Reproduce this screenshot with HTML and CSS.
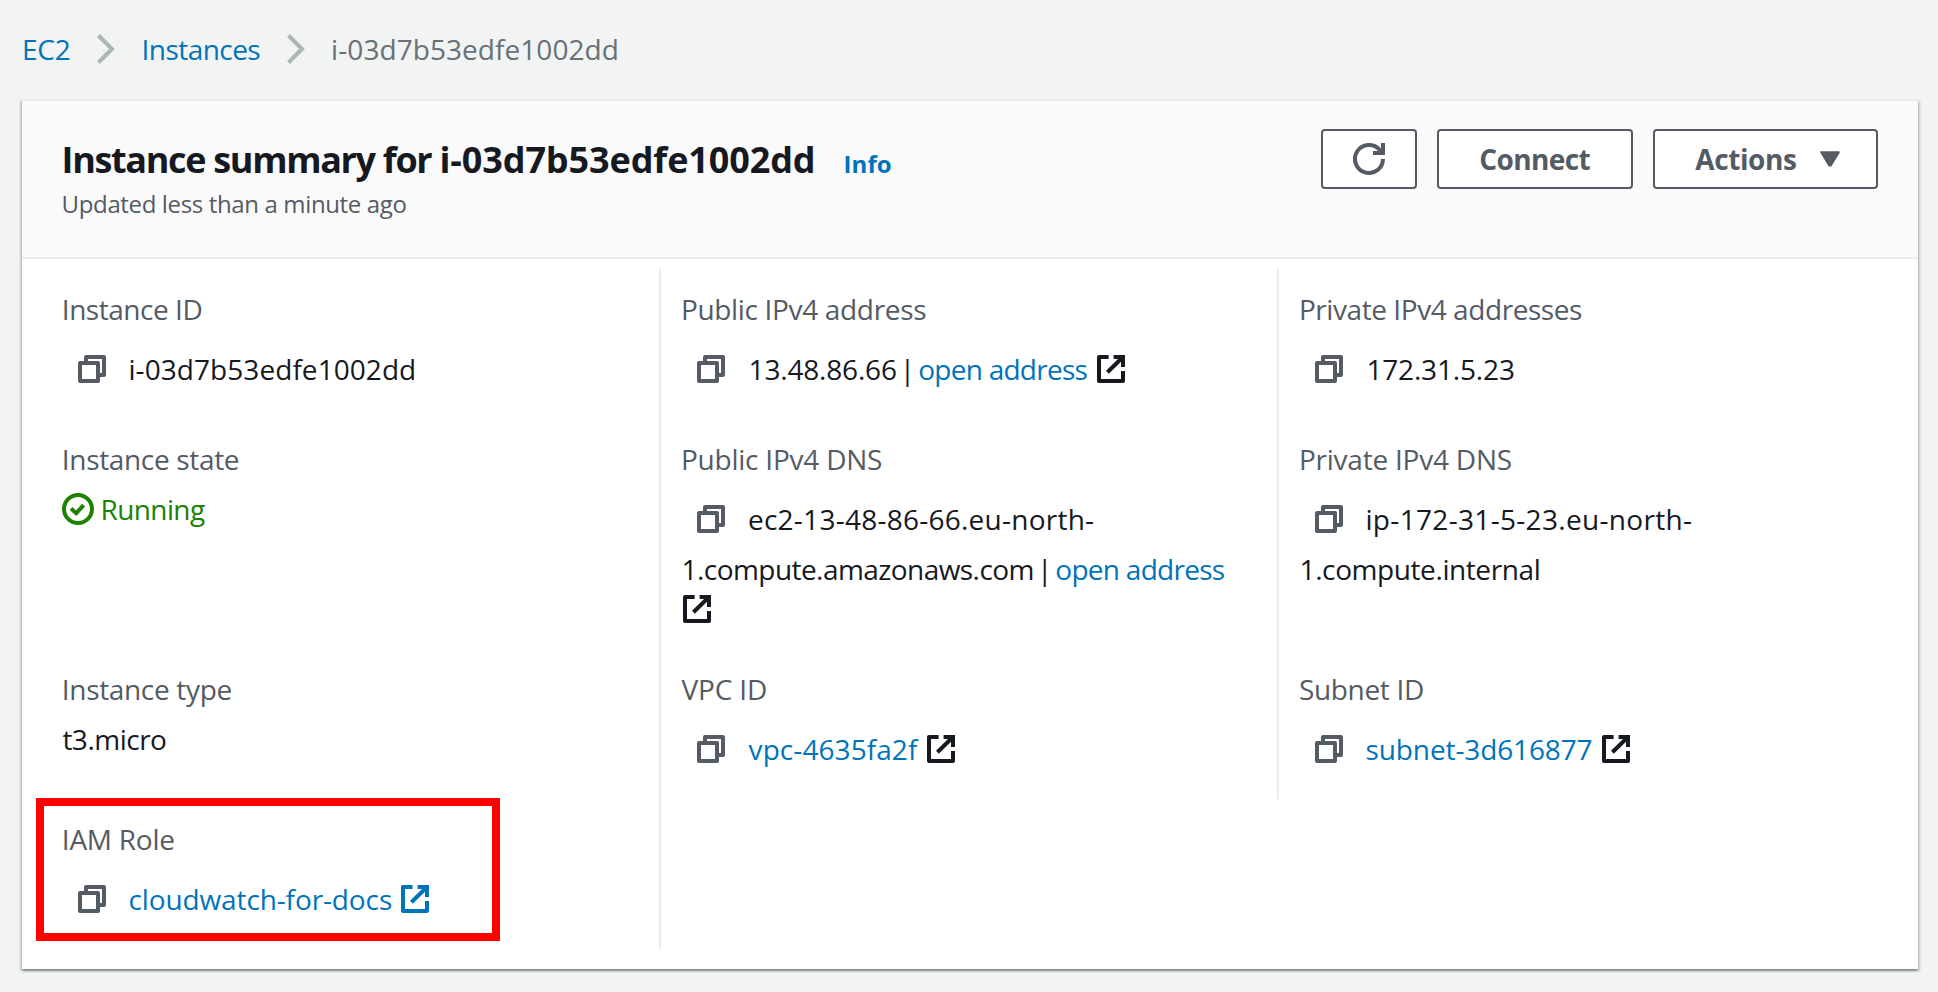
FILE: index.html
```html
<!DOCTYPE html>
<html lang="en">
<head>
<meta charset="utf-8">
<title>Instance summary</title>
<link rel="stylesheet" href="styles.css">
</head>
<body>
<svg class="sprite" aria-hidden="true">
  <symbol id="chevron" viewBox="0 0 18 30"><path d="M1.5 1.5 15 15 1.5 28.5" fill="none" stroke="currentColor" stroke-width="4"/></symbol>
  <symbol id="copy" viewBox="0 0 16 16"><path d="M2 5h9v9H2zM5 5V2h9v9h-3" fill="none" stroke="currentColor" stroke-width="2" stroke-linejoin="round"/></symbol>
  <symbol id="external" viewBox="0 0 16 16"><path d="M6.8 2H2v12h12V9M14 2 6.2 9.6" fill="none" stroke="currentColor" stroke-width="2" stroke-linejoin="round"/><path d="M9.3 2H14v5" fill="none" stroke="currentColor" stroke-width="2"/></symbol>
  <symbol id="refresh" viewBox="0 0 16 16"><path d="M15 8a7 7 0 1 1-1.8-4.7L15 5M10 5h5V0" fill="none" stroke="currentColor" stroke-width="2"/></symbol>
  <symbol id="check" viewBox="0 0 16 16"><circle cx="8" cy="8" r="7" fill="none" stroke="currentColor" stroke-width="2"/><path d="M4.5 7.8 7.1 10.1 10.8 6.1" fill="none" stroke="currentColor" stroke-width="2"/></symbol>
  <symbol id="caret" viewBox="0 0 20 16"><path d="M1.2 1.2h17.6L10.8 14.6H9.2z" fill="currentColor" stroke="currentColor" stroke-width="2" stroke-linejoin="round"/></symbol>
</svg>

<nav class="breadcrumb">
  <a class="link crumb-service">EC2</a>
  <svg class="chevron"><use href="#chevron"/></svg>
  <a class="link crumb-list">Instances</a>
  <svg class="chevron"><use href="#chevron"/></svg>
  <span class="crumb-current">i-03d7b53edfe1002dd</span>
</nav>

<main class="panel">
  <header class="panel-header">
    <div class="heading">
      <div class="title-row">
        <h1 class="title">Instance summary for <span class="title-id">i-03d7b53edfe1002dd</span></h1>
        <a class="link info">Info</a>
      </div>
      <p class="updated">Updated less than a minute ago</p>
    </div>
    <div class="actions">
      <button class="button button-refresh" aria-label="Refresh"><svg class="icon"><use href="#refresh"/></svg></button>
      <button class="button button-connect">Connect</button>
      <button class="button button-actions">Actions<svg class="caret"><use href="#caret"/></svg></button>
    </div>
  </header>

  <div class="details">
    <section class="cell first">
      <div class="label instance-label">Instance ID</div>
      <div class="line copyable"><svg class="icon copy"><use href="#copy"/></svg><span class="instance-id">i-03d7b53edfe1002dd</span></div>
    </section>
    <section class="cell">
      <div class="label">Public IPv4 address</div>
      <div class="line copyable"><svg class="icon copy"><use href="#copy"/></svg><span class="public-ip">13.48.86.66</span><span class="bar">|</span><a class="link open">open address</a><svg class="icon external"><use href="#external"/></svg></div>
    </section>
    <section class="cell">
      <div class="label private-label">Private IPv4 addresses</div>
      <div class="line copyable"><svg class="icon copy"><use href="#copy"/></svg><span class="private-ip">172.31.5.23</span></div>
    </section>

    <section class="cell first">
      <div class="label">Instance state</div>
      <div class="line running"><svg class="icon"><use href="#check"/></svg><span>Running</span></div>
    </section>
    <section class="cell">
      <div class="label dns-label">Public IPv4 DNS</div>
      <div class="line copyable"><svg class="icon copy"><use href="#copy"/></svg><span class="dns-host">ec2-13-48-86-66.eu-north-</span></div>
      <div class="line wrapped"><span class="public-domain">1.compute.amazonaws.com</span><span class="bar">|</span><a class="link open">open address</a></div>
      <svg class="icon wrapped-icon"><use href="#external"/></svg>
    </section>
    <section class="cell">
      <div class="label dns-label">Private IPv4 DNS</div>
      <div class="line copyable"><svg class="icon copy"><use href="#copy"/></svg><span class="private-host">ip-172-31-5-23.eu-north-</span></div>
      <div class="line wrapped"><span class="private-domain">1.compute.internal</span></div>
    </section>

    <section class="cell first">
      <div class="label">Instance type</div>
      <div class="line instance-type">t3.micro</div>
    </section>
    <section class="cell">
      <div class="label vpc-label">VPC ID</div>
      <div class="line copyable"><svg class="icon copy"><use href="#copy"/></svg><a class="link vpc">vpc-4635fa2f</a><svg class="icon external"><use href="#external"/></svg></div>
    </section>
    <section class="cell">
      <div class="label">Subnet ID</div>
      <div class="line copyable"><svg class="icon copy"><use href="#copy"/></svg><a class="link subnet">subnet-3d616877</a><svg class="icon external"><use href="#external"/></svg></div>
    </section>

    <section class="cell first">
      <div class="label role-label">IAM Role</div>
      <div class="line copyable"><svg class="icon copy"><use href="#copy"/></svg><a class="link role">cloudwatch-for-docs</a><svg class="icon external role-icon"><use href="#external"/></svg></div>
      <div class="highlight"></div>
    </section>
    <section class="cell"></section>
  </div>
</main>
</body>
</html>
```
FILE: styles.css
```css
* { box-sizing: border-box; }

body {
  margin: 0;
  height: 992px;
  overflow: hidden;
  background: #f2f3f3;
  color: #16191f;
  font: 28px/50px "Open Sans", "Noto Sans", sans-serif;
  white-space: nowrap;
}

.sprite { display: none; }
.link { color: #0073bb; }
.icon { display: block; flex: none; width: 32px; height: 32px; }

/* Breadcrumb */
.breadcrumb {
  display: flex;
  align-items: center;
  gap: 26.5px;
  height: 99px;
  padding: 0 21px 1px 22px;
}
.chevron { flex: none; width: 18px; height: 30px; color: #aab7b8; }
.crumb-service { letter-spacing: -0.2px; }
.crumb-list { letter-spacing: -0.56px; }
.crumb-current { color: #687078; letter-spacing: 0.06px; }

/* Panel */
.panel {
  width: 1896px;
  height: 870px;
  margin-left: 22px;
  border-top: 2px solid #eaeded;
  background: #fff;
  box-shadow: 0 2px 2px 0 rgba(0, 28, 36, 0.3), 2px 2px 2px 0 rgba(0, 28, 36, 0.15), -2px 2px 2px 0 rgba(0, 28, 36, 0.15);
}
.panel-header {
  display: flex;
  justify-content: space-between;
  align-items: flex-start;
  height: 158px;
  padding: 0 40px 0 39.6px;
  border-bottom: 2px solid #eaeded;
  background: #fafafa;
}
.heading { padding-top: 37px; }
.title-row { display: flex; align-items: baseline; gap: 28px; height: 44px; }
.title { margin: 0; font-size: 36px; line-height: 44px; font-weight: 700; letter-spacing: -1.33px; }
.title-id { letter-spacing: -0.11px; }
.info { font-size: 24px; line-height: 44px; font-weight: 700; letter-spacing: 0.1px; }
.updated { margin: 4px 0 0; color: #545b64; font-size: 24px; line-height: 36px; letter-spacing: -0.36px; }

.actions { display: flex; gap: 20px; padding-top: 28px; }
.button {
  display: flex;
  align-items: center;
  height: 60px;
  padding: 0;
  border: 2px solid #545b64;
  border-radius: 4px;
  background: #fff;
  color: #545b64;
  font: 700 28px/50px "Open Sans", "Noto Sans", sans-serif;
}
.button-refresh { width: 96px; padding-left: 30px; }
.button-connect { width: 196px; padding-left: 40.2px; letter-spacing: -0.59px; }
.button-actions { width: 225px; padding-left: 40.2px; letter-spacing: -0.38px; }
.caret { width: 20px; height: 16px; margin-left: 23.3px; }

/* Detail grid */
.details {
  display: grid;
  grid-template-columns: repeat(3, 618px);
  grid-template-rows: 150px 230px 150px 150px;
  padding: 10px 0 0 19px;
}
.cell { position: relative; padding: 15px 0 0 19.4px; border-left: 2px solid #eaeded; }
.cell.first { padding-left: 20.3px; border-left: 0; }
.label { padding-left: 0.5px; color: #545b64; letter-spacing: -0.33px; }
.instance-label { letter-spacing: -0.46px; }
.private-label { letter-spacing: -0.43px; }
.dns-label { letter-spacing: -0.22px; }
.vpc-label { padding-left: 1px; letter-spacing: -0.15px; }
.role-label { letter-spacing: -0.24px; }

.line { display: flex; align-items: center; height: 50px; }
.copyable { margin-top: 10px; }
.copy { margin: 0 20.6px 0 14.6px; color: #545b64; }
.external { margin-left: 7.6px; }
.wrapped { padding-left: 1.2px; }
.wrapped-icon { margin: -1px 0 0 0.6px; }
.bar { margin: 0 3px; }
.open { letter-spacing: -0.73px; }

.instance-id { letter-spacing: 0.06px; }
.public-ip { margin-left: 1px; letter-spacing: -0.18px; }
.private-ip { margin-left: 0.8px; letter-spacing: -0.16px; }
.dns-host { margin-left: 0.4px; letter-spacing: 0.25px; }
.private-host { margin-left: -0.1px; letter-spacing: 0.32px; }
.public-domain { letter-spacing: -0.56px; }
.private-domain { letter-spacing: -0.41px; }
.vpc { margin-left: 1px; letter-spacing: 0.07px; }
.subnet { letter-spacing: -0.12px; }
.role { letter-spacing: -0.12px; }
.role-icon { margin-left: 6.8px; color: #0073bb; }
.instance-type { padding-left: 1.1px; letter-spacing: -0.5px; }
.running { gap: 6.6px; padding-left: 0.7px; color: #1d8102; letter-spacing: -0.62px; }

/* Callout drawn over the IAM role cell */
.highlight {
  position: absolute;
  left: -5px;
  top: -1px;
  width: 464px;
  height: 143px;
  border: 8px solid #f00;
}
```
